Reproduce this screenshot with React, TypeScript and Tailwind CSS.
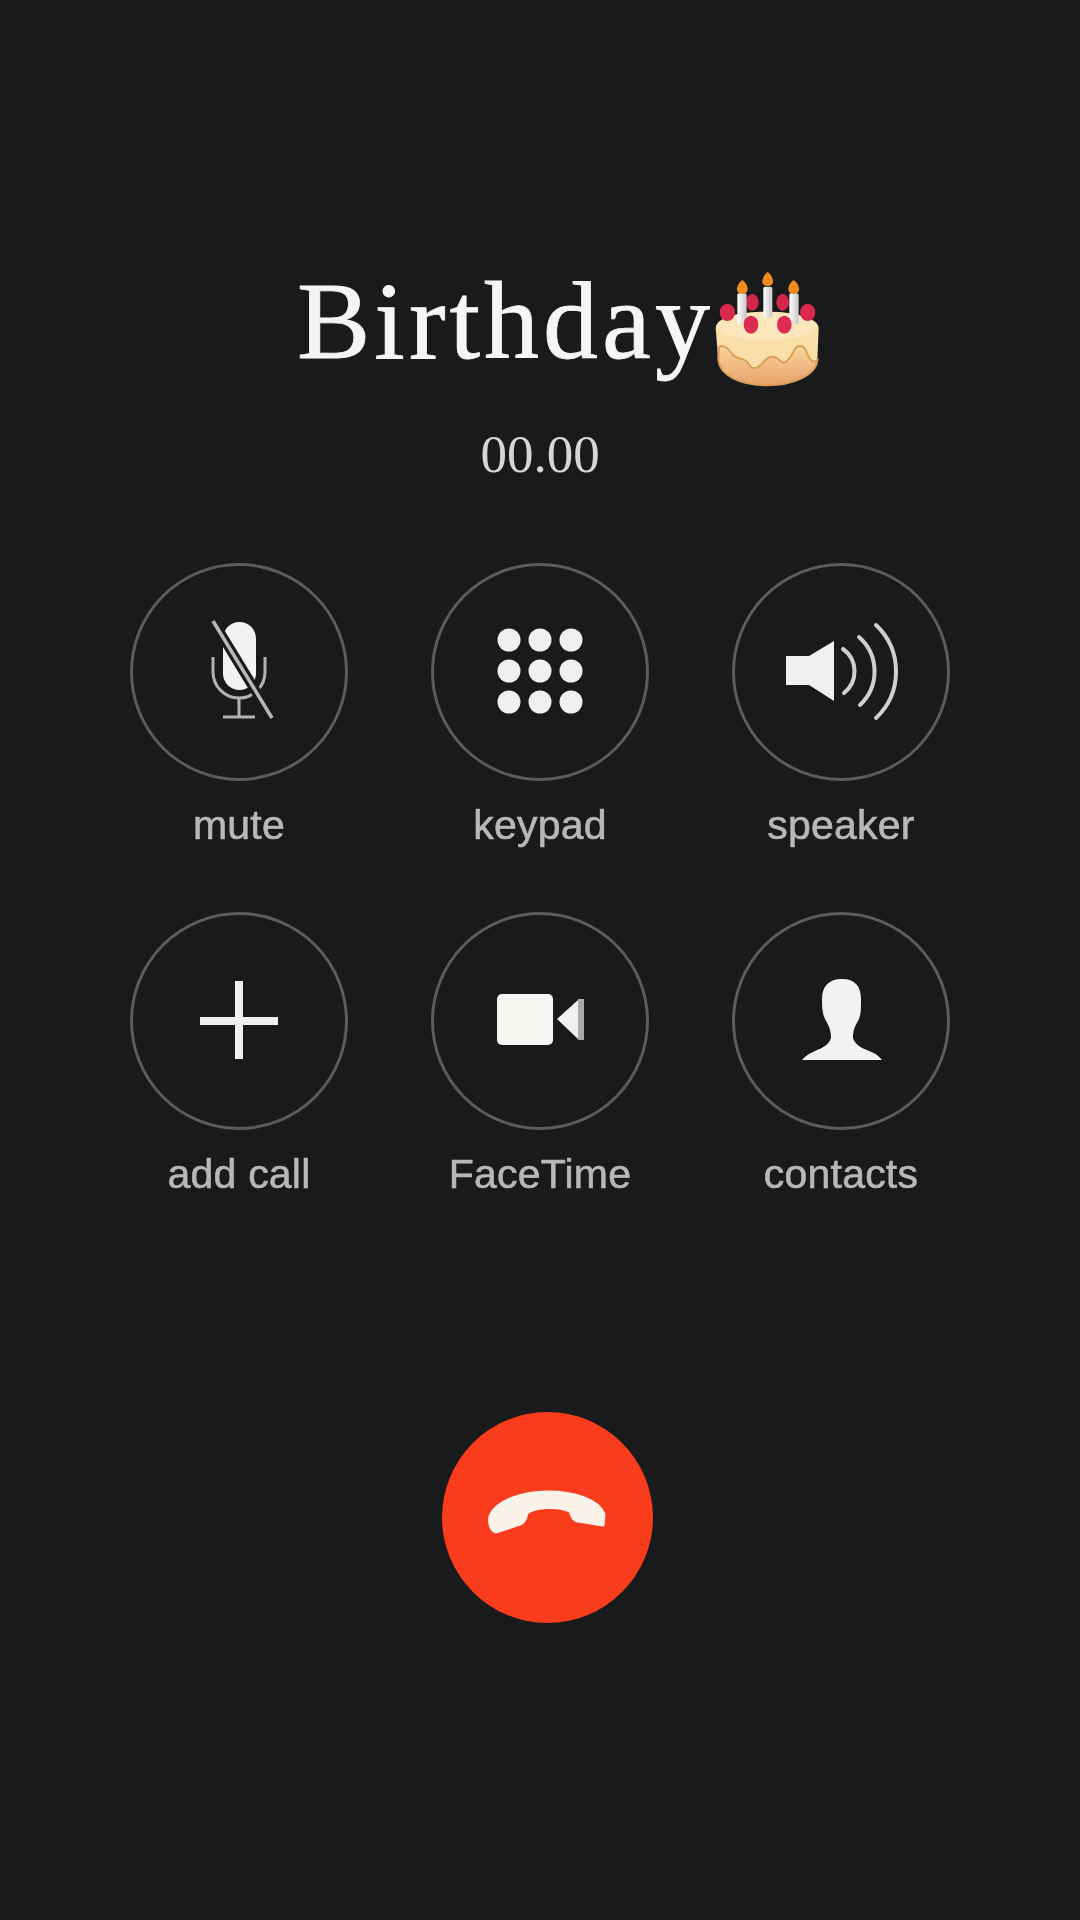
import type { ReactNode } from "react"

function CakeIcon() {
  return (
    <svg viewBox="0 0 390 390" className="-ml-[14px] -mt-[6px] h-[130px] w-[130px] shrink-0 blur-[0.6px]">
      <defs>
        <linearGradient id="cakeLower" x1="0" y1="0" x2="0" y2="1">
          <stop offset="0" stopColor="#f9d49c" />
          <stop offset="1" stopColor="#e8a26b" />
        </linearGradient>
        <linearGradient id="candle" x1="0" y1="0" x2="1" y2="0">
          <stop offset="0" stopColor="#ffffff" />
          <stop offset="1" stopColor="#c9c4c8" />
        </linearGradient>
      </defs>
      <path
        d="M47 205C47 172 120 155 200 155C280 155 356 172 356 205L352 300C348 346 280 376 200 376C120 376 60 346 55 300Z"
        fill="#fbdfa8"
      />
      <path
        d="M56 262C72 250 86 268 98 284C112 302 132 288 145 310C158 336 178 322 192 304C206 288 224 284 240 302C254 318 270 296 282 272C292 252 312 252 322 282C330 304 346 312 354 296L352 300C348 346 280 376 200 376C120 376 60 346 55 300Z"
        fill="url(#cakeLower)"
        stroke="#dc9f58"
        strokeWidth="6"
      />
      <ellipse cx="200" cy="198" rx="150" ry="42" fill="#fce6bb" />
      <ellipse cx="157" cy="127" rx="19" ry="25" fill="#d4264a" />
      <ellipse cx="248" cy="127" rx="19" ry="25" fill="#d4264a" />
      <ellipse cx="82" cy="157" rx="23" ry="26" fill="#d92a4e" />
      <ellipse cx="323" cy="157" rx="23" ry="26" fill="#d92a4e" />
      <rect x="112" y="100" width="28" height="92" rx="5" fill="url(#candle)" />
      <rect x="190" y="80" width="27" height="92" rx="5" fill="url(#candle)" />
      <rect x="268" y="100" width="28" height="92" rx="5" fill="url(#candle)" />
      <path d="M127 60C138 68 144 80 143 90C141 105 113 105 111 90C110 80 116 68 127 60Z" fill="#f28c1c" />
      <path d="M203 36C214 44 220 57 219 67C217 82 189 82 187 67C186 57 192 44 203 36Z" fill="#f28c1c" />
      <path d="M281 60C292 68 298 80 297 90C295 105 267 105 265 90C264 80 270 68 281 60Z" fill="#f28c1c" />
      <ellipse cx="153" cy="194" rx="22" ry="27" fill="#dc2a50" />
      <ellipse cx="253" cy="194" rx="22" ry="27" fill="#dc2a50" />
    </svg>
  )
}

function MuteIcon() {
  return (
    <>
      <rect x="-16" y="-50" width="33" height="68" rx="16.5" fill="#f2f2f0" />
      <g fill="none" stroke="#b2b2b2" strokeWidth="3">
        <path d="M-26 -15V0a26 26 0 0 0 52 0V-15" />
        <path d="M0 26V45M-16 45H16" />
      </g>
      <path d="M-26 -51L33 46" stroke="#181a1b" strokeWidth="10" />
      <path d="M-26 -51L33 46" stroke="#b8b8b8" strokeWidth="3.5" />
    </>
  )
}

function KeypadIcon() {
  const spots = [-31, 0, 31]
  const rows = [-32, -1, 30]
  return (
    <>
      {rows.map((y) =>
        spots.map((x) => <circle key={`${x}${y}`} cx={x} cy={y} r="11.5" fill="#f0f0ee" />),
      )}
    </>
  )
}

function SpeakerIcon() {
  return (
    <>
      <path d="M-55 -16H-32L-7 -31V29L-32 13H-55Z" fill="#f0f0ee" />
      <g fill="none" stroke="#cfcfcf" strokeWidth="4" strokeLinecap="round">
        <path d="M2 -23A27.5 27.5 0 0 1 3 21" />
        <path d="M18 -35A46 46 0 0 1 19 33" />
        <path d="M35 -47A64 64 0 0 1 35 46" />
      </g>
    </>
  )
}

function PlusIcon() {
  return <path d="M-4 -40H4V-4H39V4H4V38H-4V4H-39V-4H-4Z" fill="#f0f0ee" />
}

function FaceTimeIcon() {
  return (
    <>
      <rect x="-43" y="-27" width="56" height="51" rx="5" fill="#f6f5f2" />
      <path d="M17 -2L38 -21V18Z" fill="#f0f0ee" />
      <rect x="38" y="-22" width="6" height="41" fill="#a9a9a9" />
    </>
  )
}

function ContactIcon() {
  return (
    <path
      d="M1 -42C14 -42 20 -35 20 -22C20 -10 20 -6 17 0C14 5 12 9 12 17C14 24 21 27 28 30C34 32 38 35 41 39L-39 39C-36 35 -31 32 -26 30C-19 27 -12 24 -10 17C-10 9 -12 5 -15 0C-18 -6 -19 -10 -19 -22C-19 -35 -12 -42 1 -42Z"
      fill="#f2f2f0"
    />
  )
}

const keys: { label: string; icon: ReactNode }[] = [
  { label: "mute", icon: <MuteIcon /> },
  { label: "keypad", icon: <KeypadIcon /> },
  { label: "speaker", icon: <SpeakerIcon /> },
  { label: "add call", icon: <PlusIcon /> },
  { label: "FaceTime", icon: <FaceTimeIcon /> },
  { label: "contacts", icon: <ContactIcon /> },
]

function CallKey({ label, icon }: { label: string; icon: ReactNode }) {
  return (
    <div className="flex w-[218px] flex-col items-center">
      <div className="flex h-[218px] w-[218px] items-center justify-center rounded-full border-[3px] border-[#5b5c5c]">
        <svg viewBox="-65 -65 130 130" className="h-[130px] w-[130px] blur-[0.4px]">
          {icon}
        </svg>
      </div>
      <span className="mt-[24px] whitespace-nowrap font-['Liberation_Sans',Arial,sans-serif] text-[41px] leading-none tracking-[0.2px] text-[#b8b8b8] blur-[0.5px] [-webkit-text-stroke:0.6px_#b8b8b8]">
        {label}
      </span>
    </div>
  )
}

export default function App() {
  return (
    <div className="flex min-h-[1920px] w-full flex-col bg-[#181a1b] pt-[266px]">
      <div className="flex items-start pl-[297px]">
        <h1 className="font-['Liberation_Serif','Times_New_Roman',serif] text-[110px] font-normal leading-none tracking-[4px] text-[#f5f5f3] [-webkit-text-stroke:0.8px_#f5f5f3]">
          Birthday
        </h1>
        <CakeIcon />
      </div>

      <p className="mt-[38px] text-center font-['Liberation_Serif','Times_New_Roman',serif] text-[53px] leading-none text-[#d6d6d4]">
        00.00
      </p>

      <div className="ml-[130px] mt-[82px] grid w-[820px] grid-cols-3 gap-x-[83px] gap-y-[66px]">
        {keys.map((k) => (
          <CallKey key={k.label} label={k.label} icon={k.icon} />
        ))}
      </div>

      <button className="ml-[442px] mt-[217px] flex h-[211px] w-[211px] items-center justify-center rounded-full bg-[#f93c1c]">
        <svg viewBox="-65 -65 130 130" className="h-[130px] w-[130px] blur-[0.6px]">
          <path
            d="M-58 -2C-52 -16 -28 -26 0 -26C26 -26 50 -18 56 -4L55 7L30 3C25 3 24 -2 22 -7C10 -12 -12 -12 -21 -5C-22 0 -24 5 -28 6L-52 14C-58 12 -59 4 -58 -2Z"
            fill="#fbf3ea"
            stroke="#fbf3ea"
            strokeWidth="3"
            strokeLinejoin="round"
          />
        </svg>
      </button>
    </div>
  )
}
